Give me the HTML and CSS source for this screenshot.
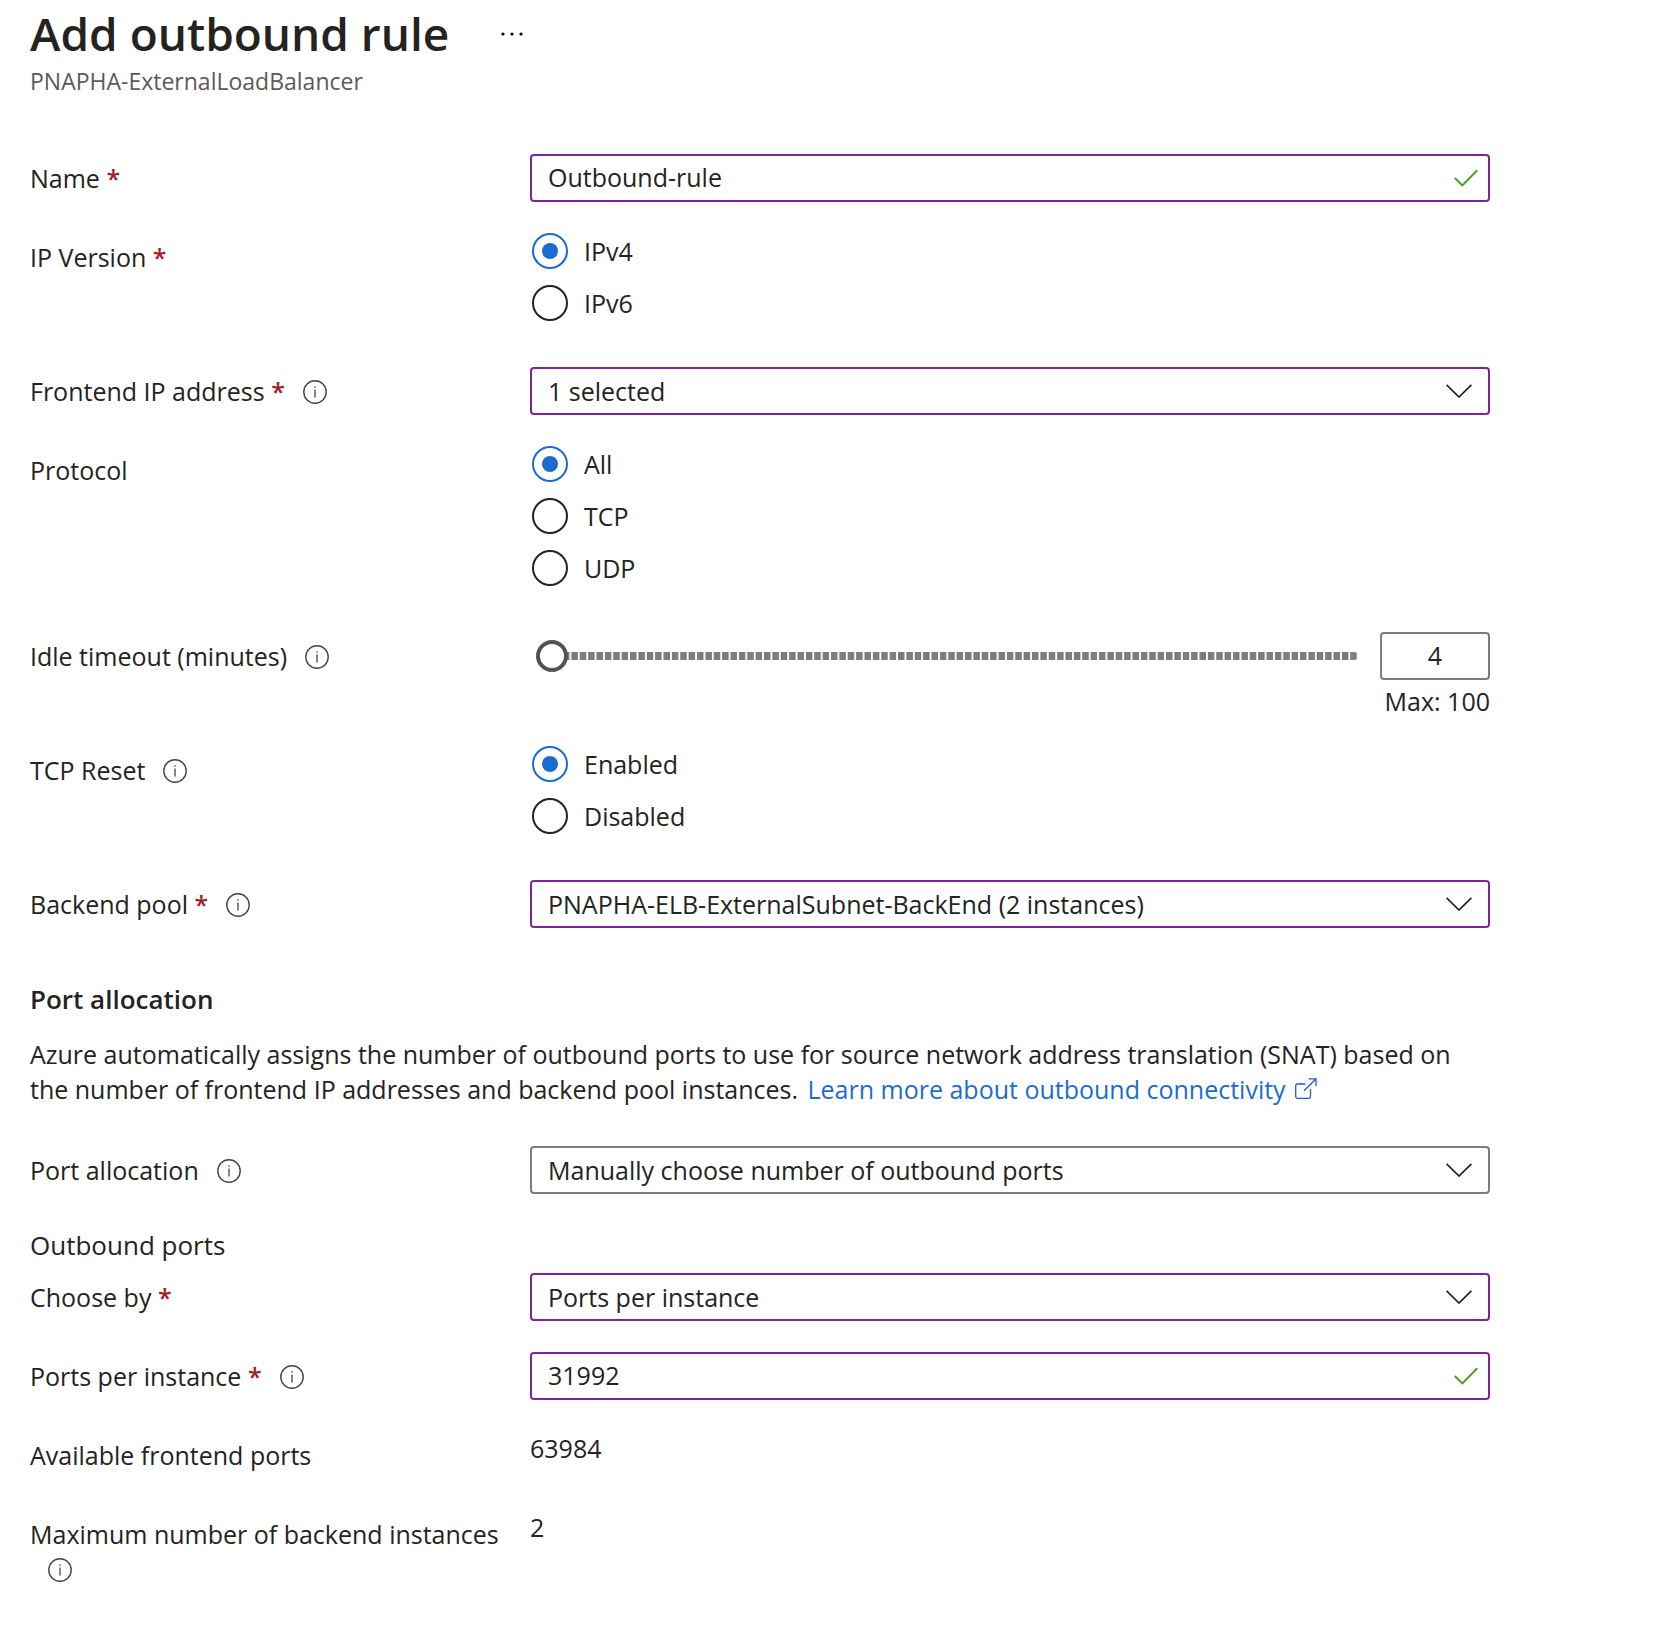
FILE: index.html
```html
<!DOCTYPE html>
<html lang="en">
<head>
<meta charset="utf-8">
<meta name="viewport" content="width=device-width, initial-scale=1">
<title>Add outbound rule</title>
<link rel="stylesheet" href="styles.css">
</head>
<body>
<svg class="sprite" aria-hidden="true">
  <symbol id="info" viewBox="0 0 24 24"><circle cx="12" cy="12" r="11.2" fill="none" stroke="currentColor" stroke-width="1.4"/><path d="M12 9.4V17.6M12 6.2V7.8" fill="none" stroke="currentColor" stroke-width="1.3"/></symbol>
  <symbol id="chevron" viewBox="0 0 26 14"><path d="M.6.8 13 13 25.4.8" fill="none" stroke="currentColor" stroke-width="1.7"/></symbol>
  <symbol id="check" viewBox="0 0 24 18"><path d="M.8 9 8.4 16.4 23.2 1.2" fill="none" stroke="currentColor" stroke-width="2"/></symbol>
  <symbol id="external" viewBox="0 0 22 22"><path d="M10.5 6H2.4Q.7 6 .7 7.7V18.6Q.7 20.3 2.4 20.3H13.8Q15.5 20.3 15.5 18.6V11M9 12.8 20.6 1.2M13.6.8H21V8.2" fill="none" stroke="currentColor" stroke-width="1.3"/></symbol>
</svg>
<main class="page">
  <header class="header">
    <div class="title-row">
      <h1 class="title">Add outbound rule</h1>
      <button class="more" type="button" aria-label="More actions"><svg viewBox="0 0 24 4" width="24" height="4"><circle cx="2" cy="2" r="1.6"/><circle cx="11" cy="2" r="1.6"/><circle cx="20" cy="2" r="1.6"/></svg></button>
    </div>
    <p class="subtitle">PNAPHA-ExternalLoadBalancer</p>
  </header>

  <form class="form">
    <div class="row">
      <div class="label"><label for="name">Name</label> <span class="required">*</span></div>
      <div class="field"><input class="box edited" id="name" type="text" value="Outbound-rule"><svg class="check"><use href="#check"/></svg></div>
    </div>
    <div class="row" role="radiogroup" aria-labelledby="ip-label">
      <div class="label"><span id="ip-label">IP Version</span> <span class="required">*</span></div>
      <div class="radios">
        <label class="radio"><input type="radio" name="ip" checked>IPv4</label>
        <label class="radio"><input type="radio" name="ip">IPv6</label>
      </div>
    </div>
    <div class="row">
      <div class="label"><label for="frontend">Frontend IP address</label> <span class="required">*</span><svg class="info"><use href="#info"/></svg></div>
      <div class="field"><select class="box edited" id="frontend"><option>1 selected</option></select><svg class="chevron"><use href="#chevron"/></svg></div>
    </div>
    <div class="row" role="radiogroup" aria-labelledby="protocol-label">
      <div class="label"><span id="protocol-label">Protocol</span></div>
      <div class="radios">
        <label class="radio"><input type="radio" name="protocol" checked>All</label>
        <label class="radio"><input type="radio" name="protocol">TCP</label>
        <label class="radio"><input type="radio" name="protocol">UDP</label>
      </div>
    </div>
    <div class="row">
      <div class="label"><label for="timeout">Idle timeout (minutes)</label><svg class="info"><use href="#info"/></svg></div>
      <div>
        <div class="slider">
          <input class="range" id="timeout" type="range" min="4" max="100" value="4">
          <input class="box minutes" type="text" inputmode="numeric" value="4" aria-label="Idle timeout in minutes">
        </div>
        <p class="hint">Max: 100</p>
      </div>
    </div>
    <div class="row" role="radiogroup" aria-labelledby="reset-label">
      <div class="label"><span id="reset-label">TCP Reset</span><svg class="info"><use href="#info"/></svg></div>
      <div class="radios">
        <label class="radio"><input type="radio" name="reset" checked>Enabled</label>
        <label class="radio"><input type="radio" name="reset">Disabled</label>
      </div>
    </div>
    <div class="row">
      <div class="label"><label for="pool">Backend pool</label> <span class="required">*</span><svg class="info"><use href="#info"/></svg></div>
      <div class="field"><select class="box edited" id="pool"><option>PNAPHA-ELB-ExternalSubnet-BackEnd (2 instances)</option></select><svg class="chevron"><use href="#chevron"/></svg></div>
    </div>

    <section class="intro">
      <h2 class="section-title">Port allocation</h2>
      <p class="text">Azure automatically assigns the number of outbound ports to use for source network address translation (SNAT) based on the number of frontend IP addresses and backend pool instances. <a class="link" href="#">Learn more about outbound connectivity <svg class="external"><use href="#external"/></svg></a></p>
    </section>

    <div class="row">
      <div class="label"><label for="allocation">Port allocation</label><svg class="info"><use href="#info"/></svg></div>
      <div class="field"><select class="box" id="allocation"><option>Manually choose number of outbound ports</option></select><svg class="chevron"><use href="#chevron"/></svg></div>
    </div>
    <section class="group">
      <h3 class="group-title">Outbound ports</h3>
      <div class="row">
        <div class="label"><label for="choose">Choose by</label> <span class="required">*</span></div>
        <div class="field"><select class="box edited" id="choose"><option>Ports per instance</option></select><svg class="chevron"><use href="#chevron"/></svg></div>
      </div>
    </section>
    <div class="row">
      <div class="label"><label for="ports">Ports per instance</label> <span class="required">*</span><svg class="info"><use href="#info"/></svg></div>
      <div class="field"><input class="box edited" id="ports" type="text" value="31992"><svg class="check"><use href="#check"/></svg></div>
    </div>
    <div class="row">
      <div class="label">Available frontend ports</div>
      <output>63984</output>
    </div>
    <div class="row">
      <div class="label">Maximum number of backend instances<svg class="info"><use href="#info"/></svg></div>
      <output>2</output>
    </div>
  </form>
</main>
</body>
</html>
```
FILE: styles.css
```css
* { box-sizing: border-box; }

body {
  margin: 0;
  background: #fff;
  color: #242322;
  font: 25px/35px "Open Sans", "Noto Sans", sans-serif;
}

h1, h2, h3, p { margin: 0; }
input, select, button { font: inherit; color: inherit; }

.sprite { position: absolute; width: 0; height: 0; }

.page { max-width: 1520px; padding: 0 30px 40px; }

.header { margin-bottom: 58px; }
.title-row { display: flex; align-items: center; gap: 44px; }
.title { font-size: 46px; line-height: 66px; font-weight: 600; }
.more { display: flex; padding: 10px 8px 8px; border: 0; background: none; }
.subtitle { font-size: 23px; line-height: 30px; color: #5c5a58; }

.form { display: flex; flex-direction: column; gap: 31px; }

.row {
  display: grid;
  grid-template-columns: minmax(200px, 500fr) minmax(0, 960fr);
  min-height: 48px;
}
.label { padding: 7px 10px 0 0; }
.required { color: #9e2028; font-weight: 600; }
.info {
  width: 24px;
  height: 24px;
  margin-left: 18px;
  vertical-align: -3px;
  color: #484644;
}

.field { display: grid; align-items: center; }
.field > * { grid-area: 1 / 1; }
.box {
  width: 100%;
  height: 48px;
  padding: 0 60px 2px 16px;
  border: 2px solid #7f7d7b;
  border-radius: 4px;
  background: #fff;
  appearance: none;
}
select.box { padding-bottom: 0; }
.edited { border-color: #7f2399; }
.check, .chevron { justify-self: end; pointer-events: none; }
.check { width: 24px; height: 18px; margin-right: 12px; color: #4f9c22; }
.chevron { width: 26px; height: 14px; margin-right: 18px; }

.radios { display: flex; flex-direction: column; gap: 16px; padding: 0 0 15px 2px; }
.radio { display: flex; align-items: center; gap: 16px; height: 36px; }
.radio input {
  display: grid;
  place-items: center;
  width: 36px;
  height: 36px;
  margin: 0;
  border: 2px solid #242322;
  border-radius: 50%;
  appearance: none;
}
.radio input:checked { border-color: #1a6dce; }
.radio input:checked::before {
  content: "";
  width: 16px;
  height: 16px;
  border-radius: 50%;
  background: #1a6dce;
}

.slider { display: flex; align-items: center; gap: 22px; padding-left: 6px; }
.range { flex: 1; min-width: 0; height: 32px; margin: 0; background: none; appearance: none; }
.range::-webkit-slider-runnable-track {
  height: 8px;
  border-radius: 4px;
  background: linear-gradient(to right, #fff 2px, #7f7d7b 2px) 0 0 / calc(100% / 98) 100%;
}
.range::-webkit-slider-thumb {
  width: 32px;
  height: 32px;
  margin-top: -12px;
  border: 4px solid #545250;
  border-radius: 50%;
  background: #fff;
  appearance: none;
}
.minutes { width: 110px; padding: 0 0 2px; text-align: center; }
.hint { padding-top: 8px; line-height: 27px; text-align: right; }

.intro { padding: 22px 0 8px; }
.section-title { margin-bottom: 20px; font-size: 26px; line-height: 36px; font-weight: 600; }
.text { max-width: 1440px; }
.link { margin-left: 3px; color: #1a6dce; text-decoration: none; }
.external { width: 22px; height: 22px; margin-left: 3px; vertical-align: -1px; color: #2456d6; }

.group-title { margin-bottom: 8px; font-size: 26px; line-height: 40px; font-weight: 400; }
```
